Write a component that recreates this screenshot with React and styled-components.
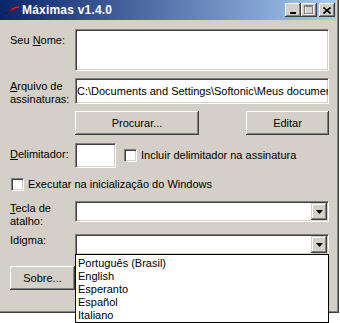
import React from 'react';
import styled, { createGlobalStyle } from 'styled-components';

const Global = createGlobalStyle`
  html, body { margin: 0; padding: 0; background: #ffffff; }
  body {
    font-family: "Liberation Sans", Arial, sans-serif;
    font-size: 11px;
    color: #000;
  }
  * { box-sizing: border-box; }
`;

const Page = styled.div`
  width: 340px;
  height: 323px;
  position: relative;
`;

const Window = styled.div`
  width: 339px;
  height: 313px;
  background: #d4d0c8;
  padding: 0 3px 3px 0;
  box-shadow: inset -1px -1px #404040, inset -2px -2px #808080;
  display: flex;
  flex-direction: column;
`;

const TitleBar = styled.div`
  height: 20px;
  flex: none;
  background: linear-gradient(to right, #0a246a, #a6caf0);
  display: flex;
  align-items: center;
  padding: 0 1px 0 3px;
`;

const TitleText = styled.span`
  color: #fff;
  font-weight: bold;
  font-size: 12px;
  letter-spacing: 0.2px;
  margin-left: 2px;
  white-space: nowrap;
`;

const CaptionGroup = styled.div`
  margin-left: auto;
  display: flex;
  align-items: center;
`;

const CaptionButton = styled.div`
  width: 16px;
  height: 14px;
  background: #d4d0c8;
  margin-left: ${p => p.$gap || 0}px;
  box-shadow: inset -1px -1px #404040, inset 1px 1px #ffffff,
    inset -2px -2px #808080, inset 2px 2px #d4d0c8;
  display: flex;
  align-items: center;
  justify-content: center;
`;

const Body = styled.div`
  flex: 1;
  padding-left: 10px;
  display: flex;
  flex-direction: column;
`;

const Row = styled.div`
  display: grid;
  grid-template-columns: 65px 254px;
  height: ${p => p.$h}px;
  margin-top: ${p => p.$mt}px;
`;

const Label = styled.div`
  line-height: 13px;
  padding-top: ${p => p.$pt || 0}px;
  white-space: nowrap;
`;

const sunken = `
  background: #ffffff;
  border: 1px solid;
  border-color: #808080 #ffffff #ffffff #808080;
  box-shadow: inset 1px 1px #404040, inset -1px -1px #d4d0c8;
`;

const Edit = styled.div`
  ${sunken}
  width: ${p => p.$w || 254}px;
  height: ${p => p.$h}px;
  padding: 0 1px;
  display: flex;
  align-items: center;
  white-space: nowrap;
  overflow: hidden;
`;

const Button = styled.div`
  width: ${p => p.$w}px;
  height: 24px;
  flex: none;
  background: #d4d0c8;
  box-shadow: inset -1px -1px #404040, inset 1px 1px #ffffff,
    inset -2px -2px #808080, inset 2px 2px #d4d0c8;
  display: flex;
  align-items: center;
  justify-content: center;
  white-space: nowrap;
`;

const ButtonPair = styled.div`
  display: flex;
  justify-content: space-between;
`;

const Inline = styled.div`
  display: flex;
  align-items: center;
`;

const CheckRow = styled.div`
  display: flex;
  align-items: center;
  height: 13px;
  margin-left: ${p => p.$ml || 0}px;
  margin-top: ${p => p.$mt || 0}px;
`;

const Checkbox = styled.div`
  ${sunken}
  width: 13px;
  height: 13px;
  flex: none;
`;

const CheckText = styled.span`
  margin-left: ${p => p.$gap}px;
  white-space: nowrap;
  line-height: 13px;
`;

const ComboWrap = styled.div`
  position: relative;
  width: 254px;
`;

const Combo = styled.div`
  ${sunken}
  height: 21px;
  display: flex;
  justify-content: flex-end;
  padding: 1px;
`;

const ArrowButton = styled.div`
  width: 16px;
  height: 17px;
  background: #d4d0c8;
  box-shadow: inset -1px -1px #404040, inset 1px 1px #d4d0c8,
    inset -2px -2px #808080, inset 2px 2px #ffffff;
  display: flex;
  align-items: center;
  justify-content: center;
`;

const DropList = styled.div`
  position: absolute;
  left: 0;
  top: 20px;
  width: 254px;
  height: 69px;
  background: #ffffff;
  border: 1px solid #000;
  padding-top: 2px;
  z-index: 2;
`;

const ListItem = styled.div`
  height: 13px;
  line-height: 13px;
  padding-left: 2px;
  white-space: nowrap;
`;

const BottomRow = styled.div`
  display: flex;
  margin-top: ${p => p.$mt}px;
`;

const Arrow = () => (
  <svg width="7" height="4" viewBox="0 0 7 4">
    <path d="M0 0H7L3.5 4Z" fill="#000" />
  </svg>
);

const AppIcon = () => (
  <svg width="17" height="12" viewBox="0 0 17 12">
    <path d="M0.5 10.5 C3 9, 5 8, 8 7" stroke="#1a1a1a" strokeWidth="1" fill="none" />
    <path d="M5 8 C8 4, 12 2, 17 2.5 C14 4.5, 11 6.5, 5 8 Z" fill="#b00000" />
    <path d="M9 5.5 C11 4, 13 3.2, 16 3" stroke="#ff4a3a" strokeWidth="0.8" fill="none" />
  </svg>
);

export default function App() {
  return (
    <>
      <Global />
      <Page>
        <Window>
          <TitleBar>
            <AppIcon />
            <TitleText>Máximas v1.4.0</TitleText>
            <CaptionGroup>
              <CaptionButton>
                <svg width="8" height="7" viewBox="0 0 8 7">
                  <rect x="1" y="5" width="6" height="2" fill="#000" />
                </svg>
              </CaptionButton>
              <CaptionButton>
                <svg width="10" height="10" viewBox="0 0 10 10">
                  <rect x="1.5" y="1.5" width="8" height="8" fill="none" stroke="#ffffff" />
                  <rect x="0.5" y="0.5" width="8" height="8" fill="none" stroke="#808080" />
                  <rect x="1" y="1" width="7" height="1" fill="#808080" />
                </svg>
              </CaptionButton>
              <CaptionButton $gap={2}>
                <svg width="8" height="7" viewBox="0 0 8 7">
                  <path d="M0.5 0.5L7.5 6.5M7.5 0.5L0.5 6.5" stroke="#000" strokeWidth="1.6" />
                </svg>
              </CaptionButton>
            </CaptionGroup>
          </TitleBar>
          <Body>
            <Row $mt={9} $h={42}>
              <Label $pt={5}>Seu <u>N</u>ome:</Label>
              <Edit $h={42} />
            </Row>
            <Row $mt={7} $h={26}>
              <Label $pt={2}><u>A</u>rquivo de<br />assinaturas:</Label>
              <Edit $h={26}>C:\Documents and Settings\Softonic\Meus documentos\Máximas\assinaturas.txt</Edit>
            </Row>
            <Row $mt={7} $h={24}>
              <span />
              <ButtonPair>
                <Button $w={124}>Procurar...</Button>
                <Button $w={83}>Editar</Button>
              </ButtonPair>
            </Row>
            <Row $mt={8} $h={25}>
              <Label $pt={5}><u>D</u>elimitador:</Label>
              <Inline>
                <Edit $w={41} $h={25} />
                <CheckRow $ml={8}>
                  <Checkbox />
                  <CheckText $gap={4}>Incluir delimitador na assinatura</CheckText>
                </CheckRow>
              </Inline>
            </Row>
            <CheckRow $ml={1} $mt={10}>
              <Checkbox />
              <CheckText $gap={4}>Executar na inicialização do Windows</CheckText>
            </CheckRow>
            <Row $mt={10} $h={21}>
              <Label $pt={1}><u>T</u>ecla de<br />atalho:</Label>
              <ComboWrap>
                <Combo>
                  <ArrowButton><Arrow /></ArrowButton>
                </Combo>
              </ComboWrap>
            </Row>
            <Row $mt={12} $h={21}>
              <Label $pt={0}>Idigma:</Label>
              <ComboWrap>
                <Combo>
                  <ArrowButton><Arrow /></ArrowButton>
                </Combo>
                <DropList>
                  <ListItem>Português (Brasil)</ListItem>
                  <ListItem>English</ListItem>
                  <ListItem>Esperanto</ListItem>
                  <ListItem>Español</ListItem>
                  <ListItem>Italiano</ListItem>
                </DropList>
              </ComboWrap>
            </Row>
            <BottomRow $mt={11}>
              <Button $w={65}>Sobre...</Button>
            </BottomRow>
          </Body>
        </Window>
      </Page>
    </>
  );
}
